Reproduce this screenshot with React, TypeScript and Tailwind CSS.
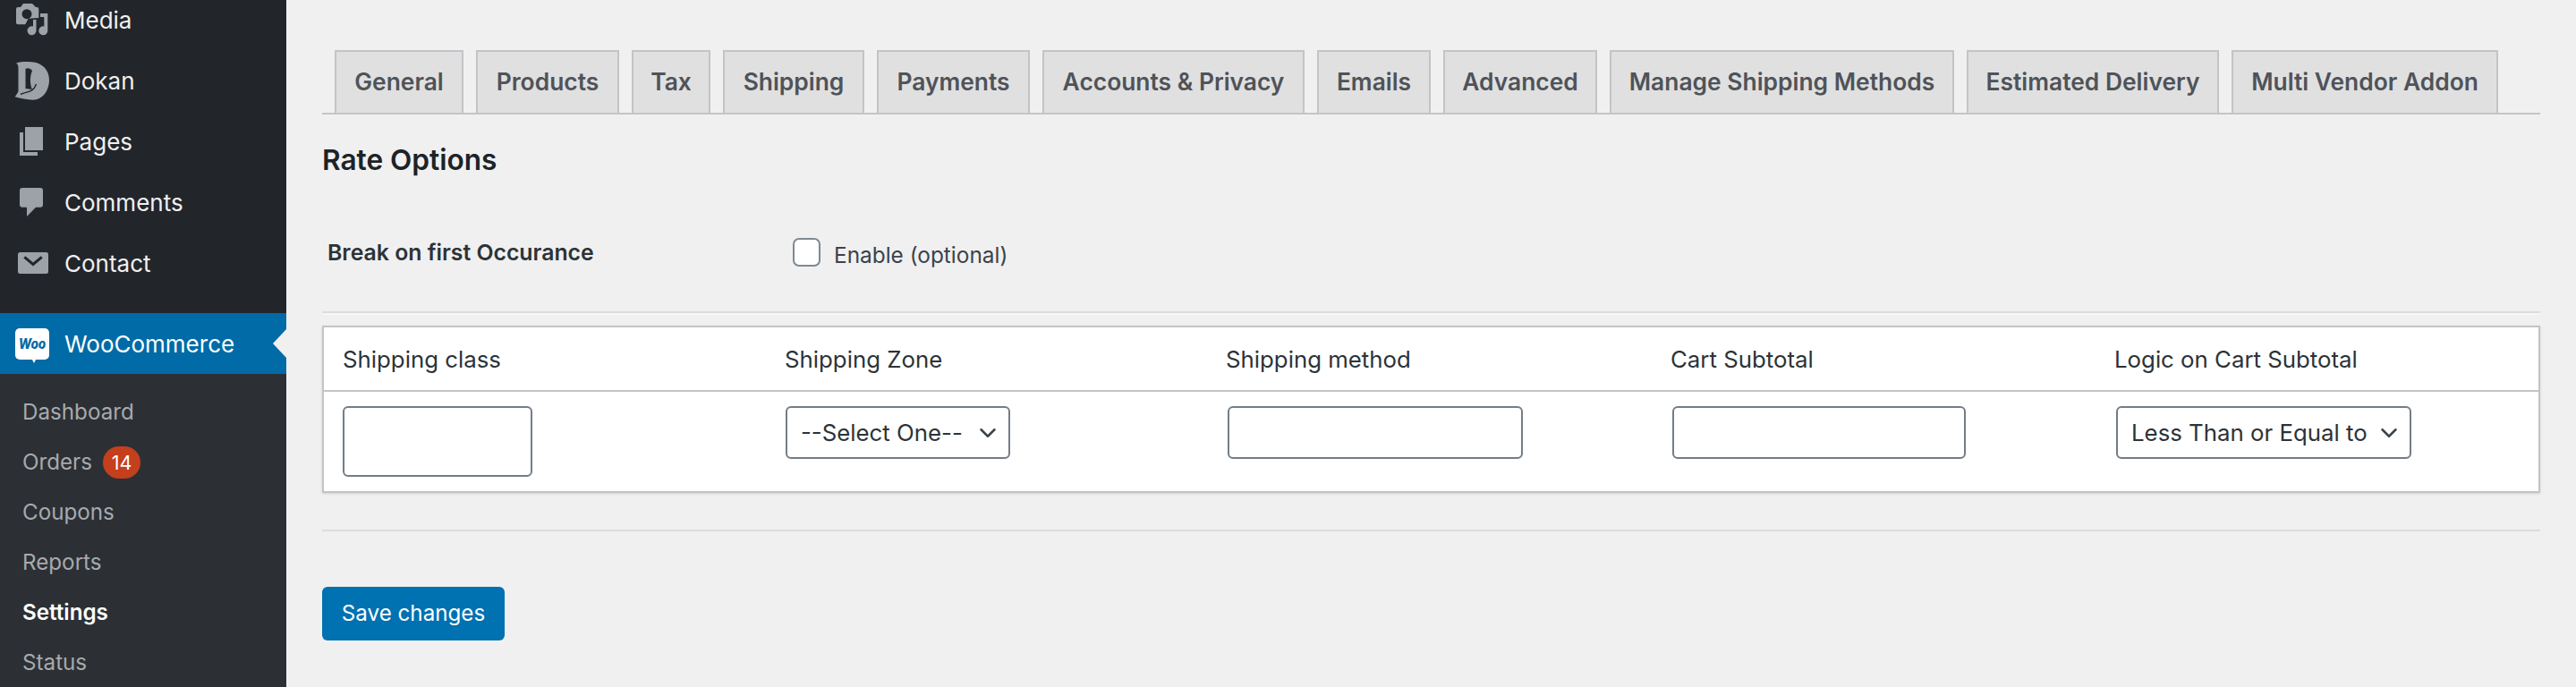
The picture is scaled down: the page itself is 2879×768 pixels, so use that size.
import { ChevronDown } from "lucide-react";

const font = "font-['Inter','Liberation_Sans',sans-serif]";

const tabs = [
  { label: "General", width: "w-[144px]" },
  { label: "Products", width: "w-[160px]" },
  { label: "Tax", width: "w-[88px]" },
  { label: "Shipping", width: "w-[158px]" },
  { label: "Payments", width: "w-[171px]" },
  { label: "Accounts & Privacy", width: "w-[293px]" },
  { label: "Emails", width: "w-[127px]" },
  { label: "Advanced", width: "w-[172px]" },
  { label: "Manage Shipping Methods", width: "w-[385px]" },
  { label: "Estimated Delivery", width: "w-[282px]" },
  { label: "Multi Vendor Addon", width: "w-[298px]" },
];

function MediaIcon() {
  return (
    <svg width="40" height="40" viewBox="0 0 40 40" fill="#9ca2a7">
      <path
        fillRule="evenodd"
        d="M2 8a2 2 0 0 1 2-2h3l3-4h10l4 4h1.300a2 2 0 0 1 2 2v10l-11.600 .7L12.300 25.300H4a2 2 0 0 1-2-2zM14 8.200a5.500 5.500 0 1 0 0 11a5.500 5.500 0 0 0 0-11z"
      />
      <path d="M29 13h8.300v19.300a5 5 0 1 1-4-4.900V17H29z" />
      <path d="M21 20h3.500v12.300a5 5 0 1 1-3.500-4.800z" />
    </svg>
  );
}

function DokanIcon() {
  return (
    <svg width="40" height="44" viewBox="0 0 40 44" fill="#9ca2a7">
      <path d="M2 2.500C8 .8 13 1 19 1.300C31 2 39 10 39 21.300C39 34 31 43.700 20.700 43.700C14 43.700 7 42 .7 40.300C2 38 4 36 4.500 34V8C4.500 5 3.500 3.500 2 2.500z" />
      <path d="M12.500 9C15 7.500 18 8.500 20 11C17 18 17.500 27 20 32L12.500 31z" fill="#22262b" />
      <path d="M7 37.500C14 34 21 36 24.500 26" fill="none" stroke="#22262b" strokeWidth="1.400" />
    </svg>
  );
}

function PagesIcon() {
  return (
    <svg width="40" height="40" viewBox="0 0 40 40" fill="#9ca2a7">
      <path d="M12 4h20v26H12z" />
      <path d="M6 10h4v22h16v4H6z" />
    </svg>
  );
}

function CommentsIcon() {
  return (
    <svg width="40" height="40" viewBox="0 0 40 40" fill="#9ca2a7">
      <path d="M9 4h20a3 3 0 0 1 3 3v15.700a3 3 0 0 1-3 3H24L14 36V25.700H9a3 3 0 0 1-3-3V7a3 3 0 0 1 3-3z" />
    </svg>
  );
}

function ContactIcon() {
  return (
    <svg width="34" height="24" viewBox="0 0 34 24" className="ml-[2px]">
      <rect width="34" height="24" rx="2.500" fill="#9ca2a7" />
      <path d="M7.300 5.300L17 13.500L26.700 5.300" fill="none" stroke="#22262b" strokeWidth="3" />
    </svg>
  );
}

function WooLogo() {
  return (
    <span className="relative flex h-[35px] w-[38px] items-center justify-center rounded-[5px] bg-white text-[#006ba6]">
      <span className="inline-block scale-x-[0.85] text-[16px] font-extrabold italic">Woo</span>
      <span className="absolute -bottom-[4px] left-[19px] h-0 w-0 border-x-[2px] border-t-[4px] border-x-transparent border-t-white" />
    </span>
  );
}

const topMenu = [
  { label: "Media", icon: <MediaIcon /> },
  { label: "Dokan", icon: <DokanIcon /> },
  { label: "Pages", icon: <PagesIcon /> },
  { label: "Comments", icon: <CommentsIcon /> },
  { label: "Contact", icon: <ContactIcon /> },
];

function Sidebar() {
  return (
    <aside className="flex h-full w-[320px] shrink-0 flex-col bg-[#22262b]">
      <ul className="-mt-[12px]">
        {topMenu.map((item) => (
          <li key={item.label} className="flex h-[68px] items-center text-[26px] text-[#f0f0f1]">
            <span className="flex w-[72px] shrink-0 justify-center">{item.icon}</span>
            {item.label}
          </li>
        ))}
      </ul>
      <div className="mt-[22px] flex h-[68px] shrink-0 items-center bg-[#006ba6] text-[26px] text-white">
        <span className="flex w-[72px] shrink-0 justify-center">
          <WooLogo />
        </span>
        WooCommerce
        <span className="ml-auto h-0 w-0 border-y-[16px] border-r-[15px] border-y-transparent border-r-[#f0f0f0]" />
      </div>
      <ul className="flex-1 bg-[#2c3035] pt-[15px] text-[24.2px] text-[#a7aaad]">
        <li className="flex h-[56px] items-center pl-[25px]">Dashboard</li>
        <li className="flex h-[56px] items-center pl-[25px]">
          Orders
          <span className="ml-[12px] flex h-[36px] min-w-[42px] items-center justify-center rounded-full bg-[#c43f1c] text-[21.5px] text-white">
            14
          </span>
        </li>
        <li className="flex h-[56px] items-center pl-[25px]">Coupons</li>
        <li className="flex h-[56px] items-center pl-[25px]">Reports</li>
        <li className="flex h-[56px] items-center pl-[25px] font-semibold text-white">Settings</li>
        <li className="flex h-[56px] items-center pl-[25px]">Status</li>
      </ul>
    </aside>
  );
}

function Select({ value, width }: { value: string; width: string }) {
  return (
    <div className={`relative h-[59px] ${width}`}>
      <select className="h-full w-full appearance-none rounded-[6px] border-2 border-[#737d87] bg-white pt-[2px] pl-[15px] text-[25.8px] text-[#2c3338]">
        <option>{value}</option>
      </select>
      <ChevronDown className="pointer-events-none absolute right-[10px] top-[15px] h-[30px] w-[30px] text-[#3c434a]" strokeWidth={2} />
    </div>
  );
}

export default function App() {
  return (
    <div className={`flex h-[768px] w-full overflow-hidden bg-[#f0f0f0] ${font}`}>
      <Sidebar />
      <main className="flex-1 px-[40px] pt-[56px]">
        <nav className="flex gap-[14px] border-b-2 border-[#c3c4c7] pl-[14px]">
          {tabs.map((t) => (
            <a
              key={t.label}
              className={`flex h-[70px] items-center justify-center border-x-2 border-t-2 border-[#c3c4c7] bg-[#e0e0e0] text-[26.4px] font-semibold whitespace-nowrap text-[#4f5359] ${t.width}`}
            >
              {t.label}
            </a>
          ))}
        </nav>
        <h2 className="mt-[31px] text-[31.6px] leading-[40px] font-semibold text-[#1d2327]">Rate Options</h2>
        <div className="mt-[59px] flex h-[48px] items-center pl-[6px]">
          <label className="mt-[2px] w-[520px] text-[24.8px] font-semibold text-[#2c3338]">Break on first Occurance</label>
          <input
            type="checkbox"
            className="h-[32px] w-[31px] appearance-none rounded-[7px] border-2 border-[#7e8993] bg-white"
          />
          <span className="mt-[6px] ml-[15px] text-[24.4px] text-[#3c434a]">Enable (optional)</span>
        </div>
        <hr className="mt-[42px] h-[4px] border-t-2 border-b-2 border-t-[#dcdcde] border-b-[#f6f7f7]" />
        <div className="mt-[12px] border-2 border-[#c3c4c7] bg-white shadow-sm">
          <div className="grid h-[72px] grid-cols-[494px_493px_497px_496px_1fr] items-center border-b-2 border-[#c3c4c7] pt-[3px] text-[25.8px] text-[#2c3338]">
            {["Shipping class", "Shipping Zone", "Shipping method", "Cart Subtotal", "Logic on Cart Subtotal"].map((h) => (
              <div key={h} className="pl-[21px]">
                {h}
              </div>
            ))}
          </div>
          <div className="grid grid-cols-[494px_493px_497px_496px_1fr] items-start py-[16px]">
            <div className="pl-[21px]">
              <input className="block h-[79px] w-[212px] rounded-[6px] border-2 border-[#737d87] bg-white" />
            </div>
            <div className="pl-[22px]">
              <Select value="--Select One--" width="w-[251px]" />
            </div>
            <div className="pl-[23px]">
              <input className="block h-[59px] w-[330px] rounded-[6px] border-2 border-[#737d87] bg-white" />
            </div>
            <div className="pl-[23px]">
              <input className="block h-[59px] w-[328px] rounded-[6px] border-2 border-[#737d87] bg-white" />
            </div>
            <div className="pl-[23px]">
              <Select value="Less Than or Equal to" width="w-[330px]" />
            </div>
          </div>
        </div>
        <hr className="mt-[41px] h-[2px] border-t-2 border-[#dcdcde]" />
        <button className="mt-[62px] h-[60px] w-[204px] rounded-[6px] bg-[#0071b1] text-[24.2px] text-white">
          Save changes
        </button>
      </main>
    </div>
  );
}
